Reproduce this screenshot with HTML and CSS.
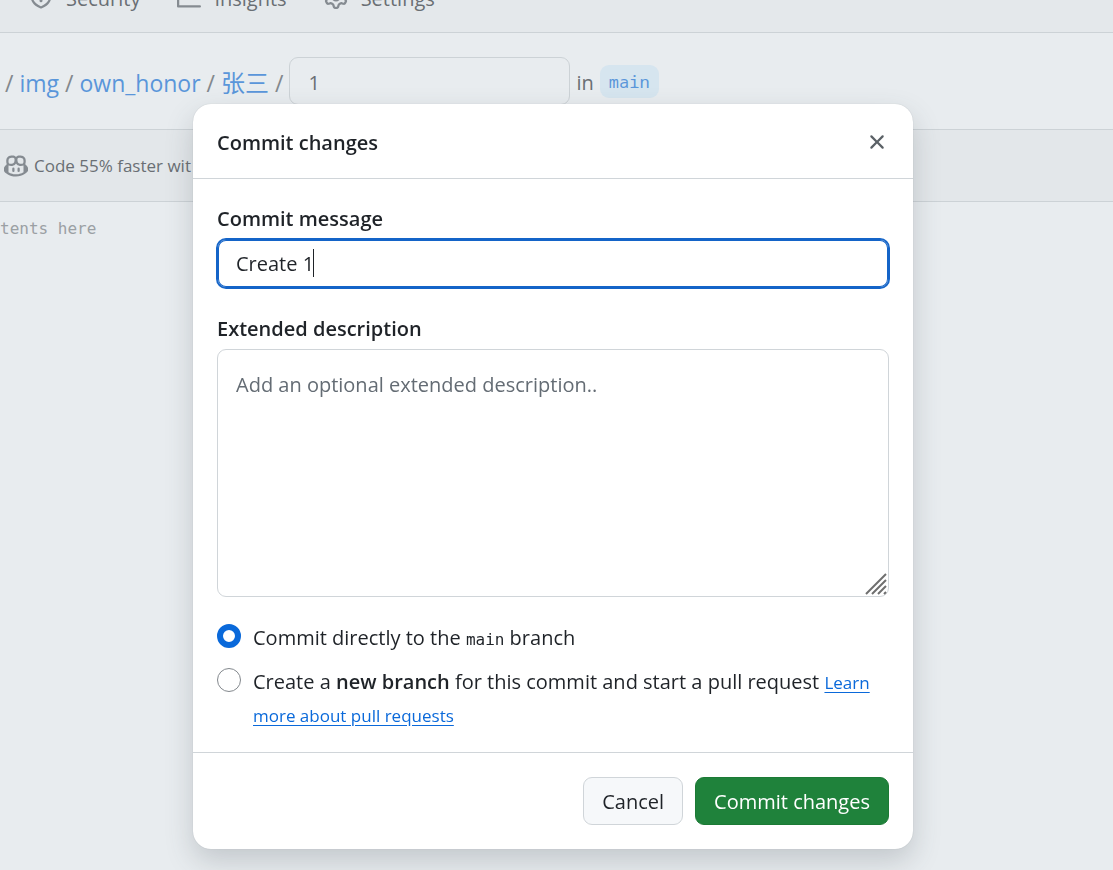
FILE: index.html
```html
<!DOCTYPE html>
<html lang="en">
<head>
<meta charset="utf-8">
<title>Commit changes</title>
<link rel="stylesheet" href="styles.css">
</head>
<body>
<div class="page">
  <nav class="tabs" aria-label="Repository">
    <a class="tab" href="#"><svg class="icon" viewBox="0 0 16 16"><path d="M7.467.133a1.748 1.748 0 0 1 1.066 0l5.25 1.68A1.75 1.75 0 0 1 15 3.48V7c0 1.566-.32 3.182-1.303 4.682-.983 1.498-2.585 2.813-5.032 3.855a1.697 1.697 0 0 1-1.33 0c-2.447-1.042-4.049-2.357-5.032-3.855C1.32 10.182 1 8.566 1 7V3.48a1.75 1.75 0 0 1 1.217-1.667Zm.61 1.429a.25.25 0 0 0-.153 0l-5.25 1.68a.25.25 0 0 0-.174.238V7c0 1.358.275 2.666 1.057 3.86.784 1.194 2.121 2.34 4.366 3.297a.196.196 0 0 0 .154 0c2.245-.956 3.582-2.104 4.366-3.298C13.225 9.666 13.5 8.36 13.5 7V3.48a.251.251 0 0 0-.174-.237l-5.25-1.68ZM8.75 4.75v3a.75.75 0 0 1-1.5 0v-3a.75.75 0 0 1 1.5 0ZM9 10.5a1 1 0 1 1-2 0 1 1 0 0 1 2 0Z"/></svg>Security</a>
    <a class="tab" href="#"><svg class="icon" viewBox="0 0 16 16"><path d="M1.5 1.75V13.5h13.75a.75.75 0 0 1 0 1.5H.75a.75.75 0 0 1-.75-.75V1.75a.75.75 0 0 1 1.5 0Zm14.28 2.53-5.25 5.25a.75.75 0 0 1-1.06 0L7 7.06 4.28 9.78a.751.751 0 0 1-1.06-1.06l3.25-3.25a.75.75 0 0 1 1.06 0L10 7.94l4.72-4.72a.751.751 0 0 1 1.06 1.06Z"/></svg>Insights</a>
    <a class="tab" href="#"><svg class="icon" viewBox="0 0 16 16"><path d="M8 0a8.2 8.2 0 0 1 .701.031C9.444.095 9.99.645 10.16 1.29l.288 1.107c.018.066.079.158.212.224.231.114.454.243.668.386.123.082.233.09.299.071l1.103-.303c.644-.176 1.392.021 1.82.63.27.385.506.792.704 1.218.315.675.111 1.422-.364 1.891l-.814.806c-.049.048-.098.147-.088.294.016.257.016.515 0 .772-.01.147.038.246.088.294l.814.806c.475.469.679 1.216.364 1.891a7.977 7.977 0 0 1-.704 1.217c-.428.61-1.176.807-1.82.63l-1.102-.302c-.067-.019-.177-.011-.3.071a5.909 5.909 0 0 1-.668.386c-.133.066-.194.158-.211.224l-.29 1.106c-.168.646-.715 1.196-1.458 1.26a8.006 8.006 0 0 1-1.402 0c-.743-.064-1.289-.614-1.458-1.26l-.289-1.106c-.018-.066-.079-.158-.212-.224a5.738 5.738 0 0 1-.668-.386c-.123-.082-.233-.09-.299-.071l-1.103.303c-.644.176-1.392-.021-1.82-.63a8.12 8.12 0 0 1-.704-1.218c-.315-.675-.111-1.422.363-1.891l.815-.806c.05-.048.098-.147.088-.294a6.214 6.214 0 0 1 0-.772c.01-.147-.038-.246-.088-.294l-.815-.806C.635 6.045.431 5.298.746 4.623a7.92 7.92 0 0 1 .704-1.217c.428-.61 1.176-.807 1.82-.63l1.102.302c.067.019.177.011.3-.071.214-.143.437-.272.668-.386.133-.066.194-.158.211-.224l.29-1.106C6.009.645 6.556.095 7.299.03 7.53.01 7.764 0 8 0Zm-.571 1.525c-.036.003-.108.036-.137.146l-.289 1.105c-.147.561-.549.967-.998 1.189-.173.086-.34.183-.5.29-.417.278-.97.423-1.529.27l-1.103-.303c-.109-.03-.175.016-.195.045-.22.312-.412.644-.573.99-.014.031-.021.11.059.19l.815.806c.411.406.562.957.53 1.456a4.709 4.709 0 0 0 0 .582c.032.499-.119 1.05-.53 1.456l-.815.806c-.081.08-.073.159-.059.19.162.346.353.677.573.989.02.03.085.076.195.046l1.102-.303c.56-.153 1.113-.008 1.53.27.161.107.328.204.501.29.447.222.85.629.997 1.189l.289 1.105c.029.109.101.143.137.146a6.6 6.6 0 0 0 1.142 0c.036-.003.108-.036.137-.146l.289-1.105c.147-.561.549-.967.998-1.189.173-.086.34-.183.5-.29.417-.278.97-.423 1.529-.27l1.103.303c.109.029.175-.016.195-.045.22-.313.411-.644.573-.99.014-.031.021-.11-.059-.19l-.815-.806c-.411-.406-.562-.957-.53-1.456a4.709 4.709 0 0 0 0-.582c-.032-.499.119-1.05.53-1.456l.815-.806c.081-.08.073-.159.059-.19a6.464 6.464 0 0 0-.573-.989c-.02-.03-.085-.076-.195-.046l-1.102.303c-.56.153-1.113.008-1.53-.27a4.44 4.44 0 0 0-.501-.29c-.447-.222-.85-.629-.997-1.189l-.289-1.105c-.029-.11-.101-.143-.137-.146a6.6 6.6 0 0 0-1.142 0ZM11 8a3 3 0 1 1-6 0 3 3 0 0 1 6 0ZM9.5 8a1.5 1.5 0 1 0-3.001.001A1.5 1.5 0 0 0 9.5 8Z"/></svg>Settings</a>
  </nav>
  <div class="crumbs">
    <span class="sep">/</span><a href="#">img</a><span class="sep">/</span><a href="#">own_honor</a><span class="sep">/</span><a href="#" lang="zh">张三</a><span class="sep">/</span>
    <input class="filename" type="text" value="1" aria-label="File name">
    <span>in</span><a class="branch" href="#">main</a>
  </div>
  <div class="copilot">
    <svg class="icon" viewBox="0 0 16 16"><path d="M7.998 15.035c-4.562 0-7.873-2.914-7.998-3.749V9.338c.085-.628.677-1.686 1.588-2.065.013-.07.024-.143.036-.218.029-.183.06-.384.126-.612-.201-.508-.254-1.084-.254-1.656 0-.87.128-1.769.693-2.484.579-.733 1.494-1.124 2.724-1.261 1.206-.134 2.262.034 2.944.765.05.053.096.108.139.165.044-.057.094-.112.143-.165.682-.731 1.738-.899 2.944-.765 1.23.137 2.145.528 2.724 1.261.566.715.693 1.614.693 2.484 0 .572-.053 1.148-.254 1.656.066.228.098.429.126.612.012.076.024.148.037.218.924.385 1.522 1.471 1.591 2.095v1.872c0 .766-3.351 3.795-8.002 3.795Zm0-1.485c2.28 0 4.584-1.11 5.002-1.433V7.862l-.023-.116c-.49.21-1.075.291-1.727.291-1.146 0-2.059-.327-2.71-.991A3.222 3.222 0 0 1 8 6.303a3.24 3.24 0 0 1-.544.743c-.65.664-1.563.991-2.71.991-.652 0-1.236-.081-1.727-.291l-.023.116v4.255c.419.323 2.722 1.433 5.002 1.433ZM6.762 2.83c-.193-.206-.637-.413-1.682-.297-1.019.113-1.479.404-1.713.7-.247.312-.369.789-.369 1.554 0 .793.129 1.171.308 1.371.162.181.519.379 1.442.379.853 0 1.339-.235 1.638-.54.315-.322.527-.827.617-1.553.117-.935-.037-1.395-.241-1.614Zm4.155-.297c-1.044-.116-1.488.091-1.681.297-.204.219-.359.679-.242 1.614.091.726.303 1.231.618 1.553.299.305.784.54 1.638.54.922 0 1.28-.198 1.442-.379.179-.2.308-.578.308-1.371 0-.765-.123-1.242-.37-1.554-.233-.296-.693-.587-1.713-.7Z"/><path d="M6.25 9.037a.75.75 0 0 1 .75.75v1.501a.75.75 0 0 1-1.5 0V9.787a.75.75 0 0 1 .75-.75Zm4.25.75v1.501a.75.75 0 0 1-1.5 0V9.787a.75.75 0 0 1 1.5 0Z"/></svg>
    <span>Code 55% faster wit</span>
  </div>
  <div class="editor">tents here</div>
</div>
<div class="overlay">
  <form class="dialog" role="dialog" aria-labelledby="title">
    <header class="dialog-head">
      <h1 id="title">Commit changes</h1>
      <button class="close" type="button" aria-label="Close"><svg class="icon" viewBox="0 0 16 16"><path d="M3.72 3.72a.75.75 0 0 1 1.06 0L8 6.94l3.22-3.22a.749.749 0 0 1 1.275.326.749.749 0 0 1-.215.734L9.06 8l3.22 3.22a.749.749 0 0 1-.326 1.275.749.749 0 0 1-.734-.215L8 9.06l-3.22 3.22a.751.751 0 0 1-1.042-.018.751.751 0 0 1-.018-1.042L6.94 8 3.72 4.78a.75.75 0 0 1 0-1.06Z"/></svg></button>
    </header>
    <div class="dialog-body">
      <label class="label" for="message">Commit message</label>
      <div class="field">
        <input class="message" id="message" type="text" value="Create 1">
        <span class="caret"></span>
      </div>
      <label class="label" for="description">Extended description</label>
      <div class="field">
        <textarea class="description" id="description" placeholder="Add an optional extended description.."></textarea>
        <svg class="grip" viewBox="0 0 24 24"><path d="M2 22 22 2M8 22 22 8M14 22l8-8M20 22l2-2"/></svg>
      </div>
      <div class="choice">
        <input type="radio" name="target" id="direct" checked>
        <div class="choice-text"><label for="direct">Commit directly to the <code>main</code> branch</label></div>
      </div>
      <div class="choice">
        <input type="radio" name="target" id="branch">
        <div class="choice-text"><label for="branch">Create a <strong>new branch</strong> for this commit and start a pull request</label> <a href="#">Learn more about pull requests</a></div>
      </div>
    </div>
    <footer class="dialog-foot">
      <button class="btn" type="button">Cancel</button>
      <button class="btn primary" type="submit">Commit changes</button>
    </footer>
  </form>
</div>
</body>
</html>
```

FILE: styles.css
```css
* { box-sizing: border-box; }
body {
  margin: 0;
  height: 100vh;
  overflow: hidden;
  background: #e8ecef;
  color: #1f2328;
  font: 20px/32px "Open Sans", "Noto Sans CJK SC", sans-serif;
}
input, textarea, button { font: inherit; color: inherit; }
.icon { width: 24px; height: 24px; fill: currentColor; flex: none; }

.page { color: #6a6f74; }
.tabs {
  display: flex;
  align-items: flex-end;
  gap: 37px;
  height: 33px;
  padding: 0 29px 17px;
  overflow: hidden;
  background: #e4e8eb;
  border-bottom: 1px solid #ccd2d6;
}
.tab {
  display: flex;
  align-items: center;
  gap: 13px;
  color: inherit;
  text-decoration: none;
}
.tab .icon { margin-bottom: 4px; color: #858b91; }
.crumbs {
  display: flex;
  align-items: center;
  gap: 6px;
  height: 96px;
  padding: 0 5px;
  white-space: nowrap;
}
.crumbs a, .crumbs span { padding-top: 3px; }
.crumbs a { color: #5a96da; font-size: 23px; text-decoration: none; }
.crumbs a:lang(zh) { font-size: 24px; }
.crumbs .sep { color: #83888d; font-size: 23px; }
.filename {
  width: 281px;
  height: 48px;
  padding: 2px 18px 0;
  background: transparent;
  border: 1px solid #ccd2d6;
  border-radius: 9px;
}
.crumbs .branch {
  padding: 0 9px;
  border-radius: 9px;
  background: #d6e5ef;
  font: 17px/33px "Noto Sans Mono", "DejaVu Sans Mono", monospace;
}
.copilot {
  display: flex;
  align-items: center;
  gap: 6px;
  height: 73px;
  padding: 1px 4px 0;
  background: #e3e7ea;
  border: solid #ccd2d6;
  border-width: 1px 0;
  font-size: 17px;
}
.copilot .icon { color: #858b91; }
.editor { padding-top: 11px; color: #9ba0a4; font: 16px/32px "DejaVu Sans Mono", monospace; }

.overlay {
  position: fixed;
  inset: 0;
  display: flex;
  align-items: flex-start;
  justify-content: center;
  padding: 104px 7px 0 0;
}
.dialog {
  width: 720px;
  background: #fff;
  border-radius: 18px;
  box-shadow: 0 12px 28px rgba(66, 74, 83, .22), 0 0 1px rgba(66, 74, 83, .3);
}
.dialog-head {
  display: flex;
  align-items: center;
  justify-content: space-between;
  height: 75px;
  padding: 2px 24px 0;
  border-bottom: 1px solid #d0d5d9;
}
.dialog-head h1 { margin: 0; padding-top: 2px; font-size: 20px; font-weight: 600; }
.close {
  display: flex;
  padding: 0;
  border: 0;
  background: none;
  color: #5b6166;
}
.dialog-body { padding: 24px 24px 20px; }
.label { display: block; font-weight: 600; }
.field { position: relative; }
.message, .description {
  display: block;
  width: 100%;
  padding: 0 18px;
  border: 1px solid #d0d5d9;
  border-radius: 9px;
  background: #fff;
  outline: 0;
}
.message {
  height: 49px;
  margin: 4px 0 25px;
  border-color: #1464c8;
  box-shadow: 0 0 0 1px #1464c8, inset 0 0 0 1px #1464c8;
}
.caret {
  position: absolute;
  top: 10px;
  left: 96px;
  width: 1px;
  height: 28px;
  background: #1f2328;
}
.description {
  height: 248px;
  margin: 4px 0 24px;
  padding-top: 19px;
  resize: none;
}
.description::placeholder { color: #646c74; opacity: 1; }
.grip {
  position: absolute;
  right: 1px;
  bottom: 1px;
  width: 24px;
  height: 24px;
  fill: none;
  stroke: #6f6f6f;
  stroke-width: 2;
}
.choice { display: flex; gap: 12px; margin-bottom: 11px; }
.choice:last-child { margin-bottom: 0; }
.choice-text { padding-top: 1px; }
.choice input {
  appearance: none;
  flex: none;
  width: 24px;
  height: 24px;
  margin: 3px 0 0;
  border: 1px solid #83888d;
  border-radius: 50%;
  background: #fff;
}
.choice input:checked { border: 6px solid #0a69da; }
.choice code { font: 16px "DejaVu Sans Mono", monospace; }
.choice strong { font-weight: 600; }
.choice a { color: #0a69da; font-size: 17px; text-underline-offset: 3px; }
.dialog-foot {
  display: flex;
  justify-content: flex-end;
  gap: 12px;
  padding: 24px;
  border-top: 1px solid #d0d5d9;
}
.btn {
  height: 48px;
  padding: 2px 18px 0;
  border: 1px solid #d0d5d9;
  border-radius: 9px;
  background: #f6f8fa;
}
.primary { border-color: #1c7a35; background: #1f823b; color: #fff; }
```
